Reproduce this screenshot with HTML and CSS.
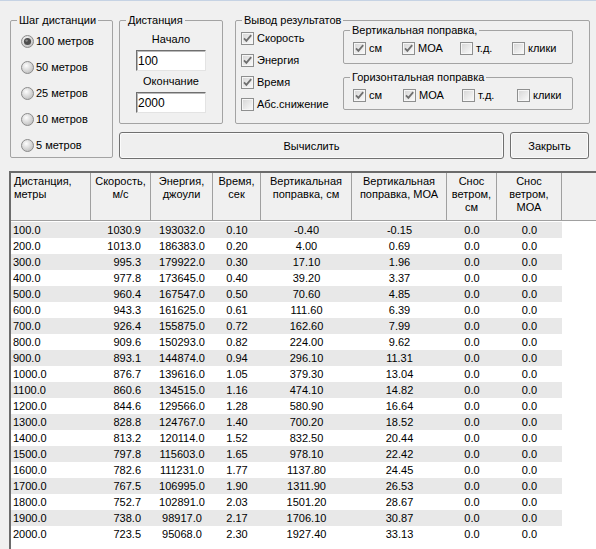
FILE: index.html
```html
<!DOCTYPE html>
<html lang="ru">
<head>
    <meta charset="UTF-8">
    <title>Таблица стрельбы</title>
    <link rel="stylesheet" href="styles.css">
</head>
<body>
    <svg class="defs" aria-hidden="true">
        <defs>
            <radialGradient id="ball" cx="0.4" cy="0.35" r="0.7">
                <stop offset="0" stop-color="#fdfdfd"/>
                <stop offset="1" stop-color="#bdbdbd"/>
            </radialGradient>
            <linearGradient id="boxfill" x1="0" y1="0" x2="1" y2="1">
                <stop offset="0" stop-color="#d8d8d8"/>
                <stop offset="1" stop-color="#f8f8f8"/>
            </linearGradient>
            <symbol id="radio" viewBox="0 0 13 13">
                <circle cx="6.5" cy="6.5" r="6" fill="url(#ball)" stroke="#8c8c8c"/>
            </symbol>
            <symbol id="radio-on" viewBox="0 0 13 13">
                <circle cx="6.5" cy="6.5" r="6" fill="url(#ball)" stroke="#8c8c8c"/>
                <circle cx="6.5" cy="6.5" r="3.6" fill="#4d4d4d"/>
                <circle cx="5.6" cy="5.6" r="1.2" fill="#8a8a8a"/>
            </symbol>
            <symbol id="box" viewBox="0 0 13 13">
                <rect x="0.5" y="0.5" width="12" height="12" fill="#f6f6f6" stroke="#8e8f8f"/>
                <rect x="2" y="2" width="9" height="9" fill="url(#boxfill)"/>
            </symbol>
            <symbol id="box-on" viewBox="0 0 13 13">
                <rect x="0.5" y="0.5" width="12" height="12" fill="#f6f6f6" stroke="#8e8f8f"/>
                <rect x="2" y="2" width="9" height="9" fill="url(#boxfill)"/>
                <path d="M3 6.3 L5.4 8.8 L10.2 3.2" fill="none" stroke="#6f6f6f" stroke-width="1.8"/>
            </symbol>
        </defs>
    </svg>

    <div class="top">
        <fieldset class="step">
            <legend>Шаг дистанции</legend>
            <div class="opts">
                <label class="opt"><svg class="mark"><use href="#radio-on"/></svg>100 метров</label>
                <label class="opt"><svg class="mark"><use href="#radio"/></svg>50 метров</label>
                <label class="opt"><svg class="mark"><use href="#radio"/></svg>25 метров</label>
                <label class="opt"><svg class="mark"><use href="#radio"/></svg>10 метров</label>
                <label class="opt"><svg class="mark"><use href="#radio"/></svg>5 метров</label>
            </div>
        </fieldset>

        <div class="right">
            <div class="right-top">
                <fieldset class="dist">
                    <legend>Дистанция</legend>
                    <div class="dist-body">
                        <span class="cap">Начало</span>
                        <input class="field" type="text" value="100">
                        <span class="cap cap-end">Окончание</span>
                        <input class="field" type="text" value="2000">
                    </div>
                </fieldset>

                <fieldset class="output">
                    <legend>Вывод результатов</legend>
                    <div class="out-body">
                        <div class="checks">
                            <label class="chk"><svg class="mark"><use href="#box-on"/></svg>Скорость</label>
                            <label class="chk"><svg class="mark"><use href="#box-on"/></svg>Энергия</label>
                            <label class="chk"><svg class="mark"><use href="#box-on"/></svg>Время</label>
                            <label class="chk"><svg class="mark"><use href="#box"/></svg>Абс.снижение</label>
                        </div>
                        <div class="subs">
                            <fieldset class="sub sub-vert">
                                <legend>Вертикальная поправка,</legend>
                                <div class="sub-row">
                                    <label class="chk"><svg class="mark"><use href="#box-on"/></svg>см</label>
                                    <label class="chk"><svg class="mark"><use href="#box-on"/></svg>МОА</label>
                                    <label class="chk"><svg class="mark"><use href="#box"/></svg>т.д.</label>
                                    <label class="chk"><svg class="mark"><use href="#box"/></svg>клики</label>
                                </div>
                            </fieldset>
                            <fieldset class="sub sub-hor">
                                <legend>Горизонтальная поправка</legend>
                                <div class="sub-row">
                                    <label class="chk"><svg class="mark"><use href="#box-on"/></svg>см</label>
                                    <label class="chk"><svg class="mark"><use href="#box-on"/></svg>МОА</label>
                                    <label class="chk"><svg class="mark"><use href="#box"/></svg>т.д.</label>
                                    <label class="chk"><svg class="mark"><use href="#box"/></svg>клики</label>
                                </div>
                            </fieldset>
                        </div>
                    </div>
                </fieldset>
            </div>

            <div class="actions">
                <button class="btn btn-calc">Вычислить</button>
                <button class="btn btn-close">Закрыть</button>
            </div>
        </div>
    </div>

    <div class="grid">
        <table class="results">
            <colgroup>
                <col style="width:80px">
                <col style="width:60px">
                <col style="width:62px">
                <col style="width:48px">
                <col style="width:91px">
                <col style="width:95px">
                <col style="width:50px">
                <col style="width:65px">
            </colgroup>
            <thead>
                <tr>
                    <th>Дистанция,<br>метры</th>
                    <th>Скорость,<br>м/с</th>
                    <th>Энергия,<br>джоули</th>
                    <th>Время,<br>сек</th>
                    <th>Вертикальная<br>поправка, см</th>
                    <th>Вертикальная<br>поправка, МОА</th>
                    <th>Снос<br>ветром,<br>см</th>
                    <th>Снос<br>ветром,<br>МОА</th>
                </tr>
            </thead>
            <tbody>
                <tr><td>100.0</td><td>1030.9</td><td>193032.0</td><td>0.10</td><td>-0.40</td><td>-0.15</td><td>0.0</td><td>0.0</td></tr>
                <tr><td>200.0</td><td>1013.0</td><td>186383.0</td><td>0.20</td><td>4.00</td><td>0.69</td><td>0.0</td><td>0.0</td></tr>
                <tr><td>300.0</td><td>995.3</td><td>179922.0</td><td>0.30</td><td>17.10</td><td>1.96</td><td>0.0</td><td>0.0</td></tr>
                <tr><td>400.0</td><td>977.8</td><td>173645.0</td><td>0.40</td><td>39.20</td><td>3.37</td><td>0.0</td><td>0.0</td></tr>
                <tr><td>500.0</td><td>960.4</td><td>167547.0</td><td>0.50</td><td>70.60</td><td>4.85</td><td>0.0</td><td>0.0</td></tr>
                <tr><td>600.0</td><td>943.3</td><td>161625.0</td><td>0.61</td><td>111.60</td><td>6.39</td><td>0.0</td><td>0.0</td></tr>
                <tr><td>700.0</td><td>926.4</td><td>155875.0</td><td>0.72</td><td>162.60</td><td>7.99</td><td>0.0</td><td>0.0</td></tr>
                <tr><td>800.0</td><td>909.6</td><td>150293.0</td><td>0.82</td><td>224.00</td><td>9.62</td><td>0.0</td><td>0.0</td></tr>
                <tr><td>900.0</td><td>893.1</td><td>144874.0</td><td>0.94</td><td>296.10</td><td>11.31</td><td>0.0</td><td>0.0</td></tr>
                <tr><td>1000.0</td><td>876.7</td><td>139616.0</td><td>1.05</td><td>379.30</td><td>13.04</td><td>0.0</td><td>0.0</td></tr>
                <tr><td>1100.0</td><td>860.6</td><td>134515.0</td><td>1.16</td><td>474.10</td><td>14.82</td><td>0.0</td><td>0.0</td></tr>
                <tr><td>1200.0</td><td>844.6</td><td>129566.0</td><td>1.28</td><td>580.90</td><td>16.64</td><td>0.0</td><td>0.0</td></tr>
                <tr><td>1300.0</td><td>828.8</td><td>124767.0</td><td>1.40</td><td>700.20</td><td>18.52</td><td>0.0</td><td>0.0</td></tr>
                <tr><td>1400.0</td><td>813.2</td><td>120114.0</td><td>1.52</td><td>832.50</td><td>20.44</td><td>0.0</td><td>0.0</td></tr>
                <tr><td>1500.0</td><td>797.8</td><td>115603.0</td><td>1.65</td><td>978.10</td><td>22.42</td><td>0.0</td><td>0.0</td></tr>
                <tr><td>1600.0</td><td>782.6</td><td>111231.0</td><td>1.77</td><td>1137.80</td><td>24.45</td><td>0.0</td><td>0.0</td></tr>
                <tr><td>1700.0</td><td>767.5</td><td>106995.0</td><td>1.90</td><td>1311.90</td><td>26.53</td><td>0.0</td><td>0.0</td></tr>
                <tr><td>1800.0</td><td>752.7</td><td>102891.0</td><td>2.03</td><td>1501.20</td><td>28.67</td><td>0.0</td><td>0.0</td></tr>
                <tr><td>1900.0</td><td>738.0</td><td>98917.0</td><td>2.17</td><td>1706.10</td><td>30.87</td><td>0.0</td><td>0.0</td></tr>
                <tr><td>2000.0</td><td>723.5</td><td>95068.0</td><td>2.30</td><td>1927.40</td><td>33.13</td><td>0.0</td><td>0.0</td></tr>
            </tbody>
        </table>
    </div>
</body>
</html>
```

FILE: styles.css
```css
body {
    margin: 0;
    width: 596px;
    height: 548px;
    overflow: hidden;
    border-top: 1px solid #c6d3e4;
    background-color: #f0f0f0;
    font-family: "Liberation Sans", Arial, sans-serif;
    font-size: 11px;
    color: #000;
}

.defs {
    position: absolute;
    width: 0;
    height: 0;
}

.mark {
    width: 13px;
    height: 13px;
    flex: none;
}

/* group boxes */
fieldset {
    margin: 0;
    padding: 0;
    min-width: 0;
    box-sizing: border-box;
    border: 1px solid #a3a3a3;
    border-radius: 2px;
}

legend {
    margin-left: 6px;
    padding: 0 2px;
    line-height: 14px;
}

.top {
    display: flex;
    padding: 12px 0 0 10px;
}

.step {
    width: 103px;
    height: 145px;
}

.opts {
    display: flex;
    flex-direction: column;
    padding: 1px 0 0 10px;
}

.opt {
    display: flex;
    align-items: center;
    gap: 2px;
    height: 26px;
}

.right {
    display: flex;
    flex-direction: column;
    margin-left: 6px;
}

.right-top {
    display: flex;
    height: 111px;
}

.dist {
    width: 104px;
    height: 111px;
}

.dist-body {
    display: flex;
    flex-direction: column;
    align-items: center;
}

.cap {
    margin-top: 5px;
    line-height: 14px;
}

.cap-end {
    margin-top: 3px;
}

.field {
    box-sizing: border-box;
    width: 70px;
    height: 21px;
    margin-top: 4px;
    padding: 0 1px;
    font: inherit;
    font-size: 12px;
    background: #fff;
    border: 1px solid;
    border-color: #6f6f6f #e3e3e3 #e3e3e3 #6f6f6f;
    box-shadow: inset 1px 1px 0 #b9b9b9;
    outline: none;
}

.output {
    width: 355px;
    height: 111px;
    margin-left: 12px;
}

.out-body {
    display: flex;
    padding-left: 5px;
}

.checks {
    display: flex;
    flex-direction: column;
    width: 102px;
}

.chk {
    display: flex;
    align-items: center;
    gap: 3px;
    height: 22px;
}

.subs {
    display: flex;
    flex-direction: column;
    gap: 6px;
    margin-top: -4px;
}

.sub {
    display: flex;
    flex-direction: column;
    width: 230px;
}

.sub-vert {
    height: 41px;
}

.sub-hor {
    height: 40px;
}

.sub-row {
    display: flex;
    align-items: center;
    flex: 1;
    padding-left: 9px;
}

.sub-vert .chk:nth-child(1) { width: 49px; }
.sub-vert .chk:nth-child(2) { width: 58px; }
.sub-vert .chk:nth-child(3) { width: 52px; }
.sub-hor .chk:nth-child(1) { width: 50px; }
.sub-hor .chk:nth-child(2) { width: 59px; }
.sub-hor .chk:nth-child(3) { width: 55px; }

.actions {
    display: flex;
    gap: 6px;
    margin-top: 8px;
}

.btn {
    height: 27px;
    padding: 0;
    font: inherit;
    color: #000;
    background-color: #efefef;
    border: 1px solid #707070;
    border-radius: 3px;
    box-shadow: inset 0 0 0 1px #fbfbfb;
}

.btn-calc {
    width: 385px;
}

.btn-close {
    width: 79px;
}

/* results grid */
.grid {
    box-sizing: border-box;
    height: 378px;
    margin: 12px 0 0 9px;
    overflow: hidden;
    border-top: 2px solid #6b6b6b;
    border-left: 2px solid #6b6b6b;
    background: linear-gradient(#f0f0f0 0 47px, #a0a0a0 47px 48px, #fff 48px);
}

.results {
    table-layout: fixed;
    width: 551px;
    border-spacing: 0;
}

.results th,
.results td {
    box-sizing: border-box;
    padding: 0;
    white-space: nowrap;
    text-align: center;
    font-weight: normal;
}

.results th {
    height: 48px;
    padding-top: 2px;
    vertical-align: top;
    line-height: 13px;
    background-color: #f0f0f0;
    border-right: 1px solid #a0a0a0;
    border-bottom: 1px solid #a0a0a0;
}

.results th:first-child {
    text-align: left;
    padding-left: 3px;
}

.results td {
    height: 16px;
    line-height: 16px;
}

.results tbody tr:first-child td {
    height: 17px;
    border-top: 1px solid #fff;
}

.results tbody tr:nth-child(odd) td {
    background-color: #e8e8e8;
}

.results td:first-child {
    text-align: left;
    padding-left: 2px;
}

.results td:nth-child(2) {
    text-align: right;
    padding-right: 10px;
}
```
